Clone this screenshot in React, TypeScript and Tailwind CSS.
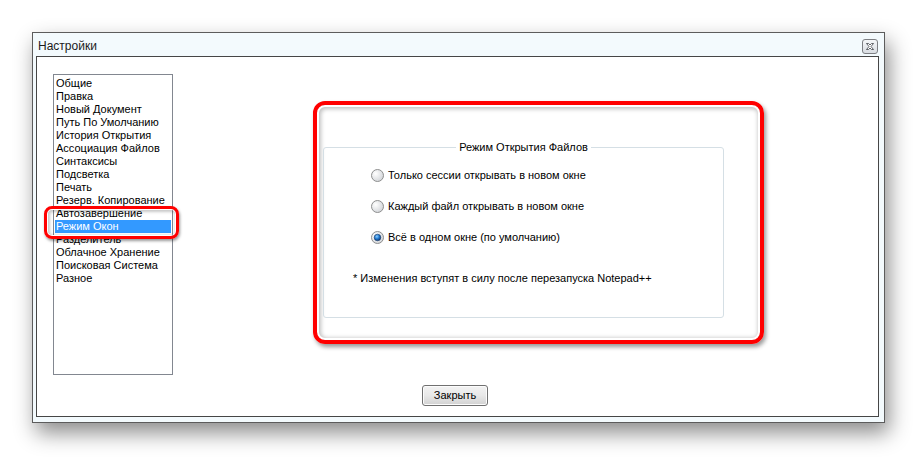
const ITEMS = [
  'Общие',
  'Правка',
  'Новый Документ',
  'Путь По Умолчанию',
  'История Открытия',
  'Ассоциация Файлов',
  'Синтаксисы',
  'Подсветка',
  'Печать',
  'Резерв. Копирование',
  'Автозавершение',
  'Режим Окон',
  'Разделитель',
  'Облачное Хранение',
  'Поисковая Система',
  'Разное',
];

const OPTIONS = [
  { label: 'Только сессии открывать в новом окне', checked: false },
  { label: 'Каждый файл открывать в новом окне', checked: false },
  { label: 'Всё в одном окне (по умолчанию)', checked: true },
];

function Radio({ checked }: { checked: boolean }) {
  return (
    <svg width="13" height="13" viewBox="0 0 13 13" className="shrink-0">
      <defs>
        <radialGradient id="rb" cx="0.35" cy="0.35" r="0.75">
          <stop offset="0" stopColor="#ffffff" />
          <stop offset="1" stopColor="#cfd2d6" />
        </radialGradient>
        <radialGradient id="rd" cx="0.4" cy="0.35" r="0.7">
          <stop offset="0" stopColor="#8fd0ff" />
          <stop offset="0.5" stopColor="#1f78cf" />
          <stop offset="1" stopColor="#0d2f63" />
        </radialGradient>
      </defs>
      <circle cx="6.5" cy="6.5" r="6" fill="url(#rb)" stroke="#8e8f8f" strokeWidth="1" />
      {checked && <circle cx="6.5" cy="6.5" r="3.3" fill="url(#rd)" stroke="#1a3a6a" strokeWidth="0.6" />}
    </svg>
  );
}

export default function App() {
  return (
    <div
      className="w-[918px] h-[457px] bg-white overflow-hidden pt-[32px] pl-[32px] text-[11px] text-black"
      style={{ fontFamily: '"Liberation Sans", Arial, sans-serif' }}
    >
      {/* window */}
      <div className="w-[853px] h-[391px] border border-[#5c5c5c] bg-[#f3fafd] px-[3px] pb-[5px] pr-[5px] flex flex-col shadow-[4px_10px_20px_rgba(0,0,0,0.45)]">
        <div className="h-[23px] flex items-center justify-between pl-[2px] pr-[1px]">
          <span className="text-[12px] text-[#1b1b1b] pt-[3px]">Настройки</span>
          <div className="w-[16px] h-[15px] mt-[4px] border border-[#7d7f83] rounded-[3px] bg-gradient-to-b from-[#f4f6f8] to-[#d9dde2] flex items-center justify-center">
            <svg width="8" height="7" viewBox="0 0 8 7">
              <path
                d="M0.5 0.5h2l1.5 1.5l1.5-1.5h2l-2.5 3l2.5 3h-2l-1.5-1.5l-1.5 1.5h-2l2.5-3z"
                fill="#fff"
                stroke="#3b3f45"
                strokeWidth="0.8"
                strokeLinejoin="round"
              />
            </svg>
          </div>
        </div>

        {/* client area */}
        <div className="flex-1 border border-[#464646] bg-white pt-[17px] pl-[16px]">
          <div className="flex items-start">
            {/* list box */}
            <div className="relative w-[120px] h-[301px] border border-[#828790] pt-[2px] pl-[1px] pr-[1px]">
              {ITEMS.map((it, i) => (
                <div
                  key={it}
                  className={`h-[13px] leading-[13px] pl-[1px] whitespace-nowrap ${
                    i === 11 ? 'bg-[#3399ff] text-white' : ''
                  }`}
                >
                  {it}
                </div>
              ))}
              {/* highlight annotation */}
              <div className="absolute left-[-10px] top-[131px] w-[135px] h-[33px] rounded-[8px] border-[3px] border-[#ff0000] shadow-[1px_2px_3px_rgba(0,0,0,0.4),inset_0_0_0_1px_#fff,inset_1px_1px_3px_2px_rgba(0,0,0,0.22)]" />
            </div>

            {/* red annotated panel */}
            <div className="ml-[140px] mt-[27px] w-[451px] h-[243px] rounded-[12px] border-[4px] border-[#ff0000] pl-[6px] pt-[42px] shadow-[2px_3px_4px_rgba(0,0,0,0.4),inset_0_0_0_2px_#fff,inset_1px_1px_4px_3px_rgba(0,0,0,0.25)]">
              <div className="relative w-[401px] h-[171px] border border-[#d5dfe5] rounded-[3px] pl-[47px] pt-[21px]">
                <div className="absolute left-0 right-0 top-[-7px] flex justify-center">
                  <span className="bg-white px-[3px] leading-[13px]">Режим Открытия Файлов</span>
                </div>
                <div className="flex flex-col gap-[18px]">
                  {OPTIONS.map((o) => (
                    <div key={o.label} className="flex items-center gap-[4px] h-[13px] leading-[13px]">
                      <Radio checked={o.checked} />
                      <span>{o.label}</span>
                    </div>
                  ))}
                </div>
                <div className="mt-[28px] -ml-[18px] leading-[13px]">* Изменения вступят в силу после перезапуска Notepad++</div>
              </div>
            </div>
          </div>

          <div className="mt-[10px] ml-[369px] w-[66px] h-[21px] border border-[#707070] rounded-[3px] bg-gradient-to-b from-[#f3f3f3] via-[#e8e8e8] to-[#d2d2d2] shadow-[inset_0_0_0_1px_#fcfcfc] flex items-center justify-center leading-[13px]">
            Закрыть
          </div>
        </div>
      </div>
    </div>
  );
}
